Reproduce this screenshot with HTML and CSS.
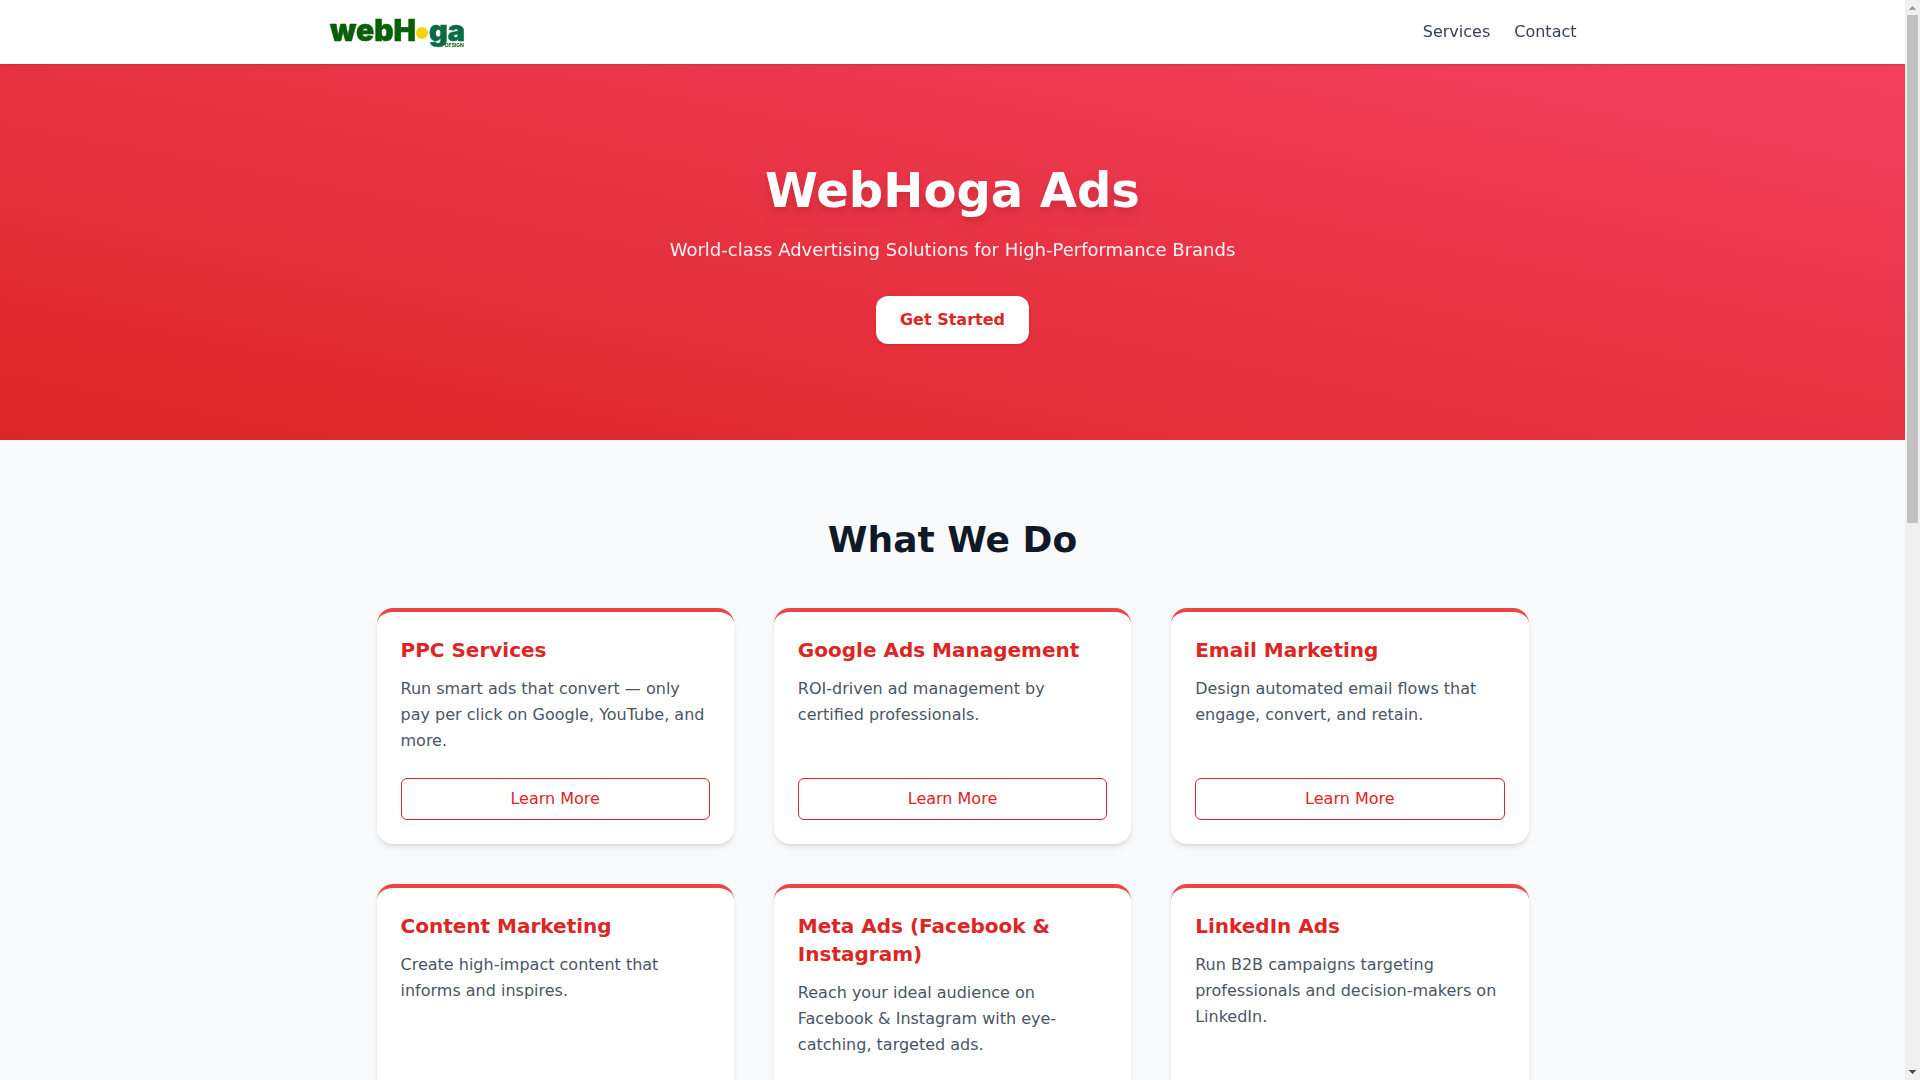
FILE: index.html
```html
<!DOCTYPE html>
<html lang="en">
<head>
    <meta charset="UTF-8" />
    <meta name="viewport" content="width=device-width, initial-scale=1" />
    <title>WebHoga Ads</title>
    <link rel="stylesheet" href="styles.css">
</head>
<body>

<div class="page">
    <header class="site-header">
        <div class="header-inner">
            <a href="#" class="logo" aria-label="webHoga Design">
                <svg width="136" height="32" viewBox="0 0 136 32" aria-hidden="true">
                    <text class="logo-web" x="1" y="25">webH</text>
                    <circle cx="93" cy="17" r="6" fill="#f9d40a" />
                    <text class="logo-ga" x="100" y="25">ga</text>
                    <text class="logo-design" x="116" y="31">DESIGN</text>
                </svg>
            </a>
            <nav class="site-nav">
                <a href="#services">Services</a>
                <a href="#contact">Contact</a>
            </nav>
        </div>
    </header>

    <main>
        <section class="hero">
            <h1>WebHoga Ads</h1>
            <p>World-class Advertising Solutions for High-Performance Brands</p>
            <a href="#contact" class="hero-btn">Get Started</a>
        </section>

        <section class="services" id="services">
            <h2>What We Do</h2>
            <div class="card-grid">
                <article class="card">
                    <h3>PPC Services</h3>
                    <p>Run smart ads that convert — only pay per click on Google, YouTube, and more.</p>
                    <a href="#contact" class="card-btn">Learn More</a>
                </article>
                <article class="card">
                    <h3>Google Ads Management</h3>
                    <p>ROI-driven ad management by certified professionals.</p>
                    <a href="#contact" class="card-btn">Learn More</a>
                </article>
                <article class="card">
                    <h3>Email Marketing</h3>
                    <p>Design automated email flows that engage, convert, and retain.</p>
                    <a href="#contact" class="card-btn">Learn More</a>
                </article>
                <article class="card">
                    <h3>Content Marketing</h3>
                    <p>Create high-impact content that informs and inspires.</p>
                    <a href="#contact" class="card-btn">Learn More</a>
                </article>
                <article class="card">
                    <h3>Meta Ads (Facebook &amp; Instagram)</h3>
                    <p>Reach your ideal audience on Facebook &amp; Instagram with eye-catching, targeted ads.</p>
                    <a href="#contact" class="card-btn">Learn More</a>
                </article>
                <article class="card">
                    <h3>LinkedIn Ads</h3>
                    <p>Run B2B campaigns targeting professionals and decision-makers on LinkedIn.</p>
                    <a href="#contact" class="card-btn">Learn More</a>
                </article>
            </div>
        </section>

        <section class="contact" id="contact">
            <h2>Contact</h2>
            <form class="contact-form">
                <label for="name">Name</label>
                <input type="text" id="name" name="name" required />

                <label for="email">Email</label>
                <input type="email" id="email" name="email" required />

                <label for="message">Message</label>
                <textarea id="message" name="message" rows="12" required></textarea>

                <button type="submit">Get Started</button>
            </form>
        </section>
    </main>
</div>

<div class="scrollbar" aria-hidden="true">
    <svg class="arrow-up" width="15" height="15" viewBox="0 0 15 15" shape-rendering="crispEdges">
        <path d="M4 10h7v-1h-1v-1h-1v-1h-1v-1h-1v1h-1v1h-1v1h-1z" />
    </svg>
    <div class="track"><div class="thumb"></div></div>
    <svg class="arrow-down" width="15" height="15" viewBox="0 0 15 15" shape-rendering="crispEdges">
        <path d="M4 5h7v1h-1v1h-1v1h-1v1h-1v-1h-1v-1h-1v-1h-1z" />
    </svg>
</div>

</body>
</html>
```
FILE: styles.css
```css
* {
    box-sizing: border-box;
}

body {
    display: flex;
    height: 100vh;
    margin: 0;
    font-family: 'DejaVu Sans', Verdana, sans-serif;
    font-size: 16px;
    line-height: 24px;
    background: #f9fafb;
    color: #1f2937;
}

h1, h2, h3, p {
    margin: 0;
}

a {
    color: inherit;
    text-decoration: none;
}

.page {
    flex: 1;
    min-width: 0;
    overflow-y: auto;
    scrollbar-width: none;
    scroll-behavior: smooth;
}

/* Header */
.site-header {
    position: sticky;
    top: 0;
    z-index: 10;
    background: #fff;
    box-shadow: 0 1px 3px rgba(0,0,0,0.1), 0 1px 2px -1px rgba(0,0,0,0.1);
}

.header-inner {
    display: flex;
    align-items: center;
    justify-content: space-between;
    max-width: 1280px;
    margin: 0 auto;
    padding: 16px;
}

.logo svg {
    display: block;
    overflow: visible;
}

.logo-web,
.logo-ga {
    font-family: Inter, 'Open Sans', sans-serif;
    font-size: 30px;
    font-weight: 900;
    fill: #066006;
    stroke: #066006;
    stroke-width: 0.5px;
}

.logo-ga {
    font-size: 29px;
    fill: #0b6b45;
    stroke: #0b6b45;
}

.logo-design {
    font-family: Inter, 'Open Sans', sans-serif;
    font-size: 5px;
    font-weight: 700;
    fill: #066006;
}

.site-nav {
    display: flex;
    gap: 24px;
    color: #374151;
}

.site-nav a:hover {
    color: #dc2626;
}

/* Hero */
.hero {
    padding: 96px 16px;
    text-align: center;
    color: #fff;
    background: linear-gradient(to top right, #dc2626, #f43f5e);
}

.hero h1 {
    margin-bottom: 16px;
    font-size: 48px;
    line-height: 60px;
    filter: drop-shadow(0 10px 8px rgba(0,0,0,0.04)) drop-shadow(0 4px 3px rgba(0,0,0,0.1));
}

.hero p {
    margin-bottom: 32px;
    font-size: 18px;
    line-height: 28px;
    opacity: 0.95;
}

.hero-btn {
    display: block;
    width: fit-content;
    margin: 0 auto;
    padding: 12px 24px;
    border-radius: 12px;
    background: #fff;
    color: #dc2626;
    font-weight: 600;
    box-shadow: 0 1px 3px rgba(0,0,0,0.1), 0 1px 2px -1px rgba(0,0,0,0.1);
}

/* Services */
.services {
    padding: 80px 16px;
}

.services h2,
.contact h2 {
    margin-bottom: 48px;
    font-size: 36px;
    line-height: 40px;
    text-align: center;
    color: #111827;
}

.card-grid {
    display: grid;
    grid-template-columns: repeat(auto-fit, minmax(300px, 1fr));
    gap: 40px;
    max-width: 1152px;
    margin: 0 auto;
}

.card {
    display: flex;
    flex-direction: column;
    padding: 24px;
    border-top: 4px solid #ef4444;
    border-radius: 16px;
    background: #fff;
    box-shadow: 0 4px 6px -1px rgba(0,0,0,0.1), 0 2px 4px -2px rgba(0,0,0,0.1);
}

.card h3 {
    margin-bottom: 12px;
    font-size: 20px;
    line-height: 28px;
    color: #dc2626;
}

.card p {
    margin-bottom: 24px;
    line-height: 26px;
    color: #4b5563;
}

.card-btn {
    margin-top: auto;
    padding: 8px 16px;
    border: 1px solid #dc2626;
    border-radius: 6px;
    text-align: center;
    color: #dc2626;
}

.card-btn:hover {
    background: #dc2626;
    color: #fff;
}

/* Contact */
.contact {
    padding: 80px 16px;
    background: #fff;
}

.contact-form {
    display: flex;
    flex-direction: column;
    gap: 12px;
    max-width: 672px;
    margin: 0 auto;
}

.contact-form input,
.contact-form textarea {
    padding: 12px;
    margin-bottom: 12px;
    border: 1px solid #d1d5db;
    border-radius: 6px;
    font: inherit;
}

.contact-form button {
    padding: 12px 24px;
    border: none;
    border-radius: 12px;
    background: #dc2626;
    color: #fff;
    font: inherit;
    font-weight: 600;
    cursor: pointer;
}

/* Scrollbar */
.scrollbar {
    display: flex;
    flex-direction: column;
    width: 15px;
    background: #f0f0f0;
}

.scrollbar svg {
    display: block;
}

.arrow-up {
    fill: #a0a0a0;
}

.arrow-down {
    fill: #505050;
}

.track {
    flex: 1;
    padding: 0 2px;
}

.thumb {
    height: 48.4%;
    background: #c1c1c1;
}
```
